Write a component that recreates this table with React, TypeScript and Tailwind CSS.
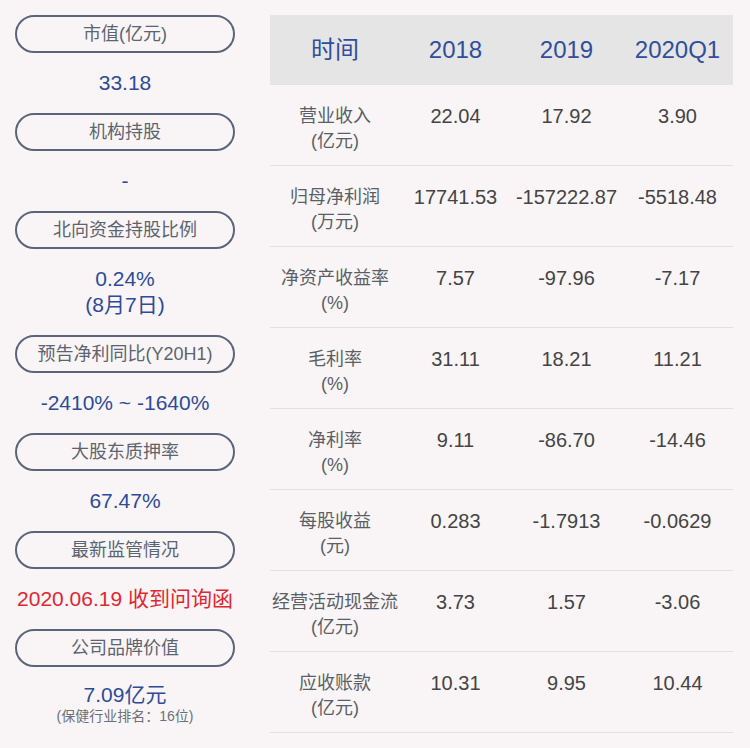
const font = { fontFamily: '"Liberation Sans", "Noto Sans CJK SC", sans-serif' }

const stats = [
  { label: '市值(亿元)', lines: ['33.18'] },
  { label: '机构持股', lines: ['-'] },
  { label: '北向资金持股比例', lines: ['0.24%', '(8月7日)'] },
  { label: '预告净利同比(Y20H1)', lines: ['-2410% ~ -1640%'] },
  { label: '大股东质押率', lines: ['67.47%'] },
  { label: '最新监管情况', lines: ['2020.06.19 收到问询函'], red: true },
]

const rows = [
  { name: ['营业收入', '(亿元)'], vals: ['22.04', '17.92', '3.90'] },
  { name: ['归母净利润', '(万元)'], vals: ['17741.53', '-157222.87', '-5518.48'] },
  { name: ['净资产收益率', '(%)'], vals: ['7.57', '-97.96', '-7.17'] },
  { name: ['毛利率', '(%)'], vals: ['31.11', '18.21', '11.21'] },
  { name: ['净利率', '(%)'], vals: ['9.11', '-86.70', '-14.46'] },
  { name: ['每股收益', '(元)'], vals: ['0.283', '-1.7913', '-0.0629'] },
  { name: ['经营活动现金流', '(亿元)'], vals: ['3.73', '1.57', '-3.06'] },
  { name: ['应收账款', '(亿元)'], vals: ['10.31', '9.95', '10.44'] },
]

function Pill({ text }: { text: string }) {
  return (
    <div className="h-[38px] rounded-full border-2 border-[#5c6577] flex items-center justify-center text-[18px] text-[#5c6470]">
      {text}
    </div>
  )
}

export default function App() {
  return (
    <div style={font} className="w-[750px] h-[748px] bg-[#f9f5f7] flex pl-[15px] pt-[15px] gap-[35px] overflow-hidden">
      {/* left column */}
      <div className="w-[220px] flex flex-col">
        {stats.map((s, i) => (
          <div key={i}>
            <Pill text={s.label} />
            <div
              className={`py-[17px] text-center text-[21px] leading-[26px] whitespace-nowrap ${
                s.red ? 'text-[#e2262f]' : 'text-[#2d4b98]'
              }`}
            >
              {s.lines.map((l, j) => (
                <div key={j}>{l}</div>
              ))}
            </div>
          </div>
        ))}
        <Pill text="公司品牌价值" />
        <div className="pt-[15px] text-center">
          <div className="text-[21px] leading-[26px] text-[#2d4b98]">7.09亿元</div>
          <div className="text-[14px] leading-[16px] text-[#6b7079]">(保健行业排名：16位)</div>
        </div>
      </div>

      {/* right table */}
      <div className="w-[463px]">
        <div className="h-[70px] bg-[#e5e5e5] grid grid-cols-[130px_111px_111px_111px] items-center text-center text-[24px] text-[#2f4e9b]">
          <div>时间</div>
          <div>2018</div>
          <div>2019</div>
          <div>2020Q1</div>
        </div>
        {rows.map((r, i) => (
          <div
            key={i}
            className="h-[81px] border-b border-[#e4e0e2] grid grid-cols-[130px_111px_111px_111px] pt-[19px] text-center"
          >
            <div className="text-[18px] leading-[25px] text-[#5a5f66] whitespace-nowrap">
              <div>{r.name[0]}</div>
              <div>{r.name[1]}</div>
            </div>
            {r.vals.map((v, j) => (
              <div key={j} className="text-[20px] leading-[25px] text-[#444] whitespace-nowrap">
                {v}
              </div>
            ))}
          </div>
        ))}
      </div>
    </div>
  )
}
